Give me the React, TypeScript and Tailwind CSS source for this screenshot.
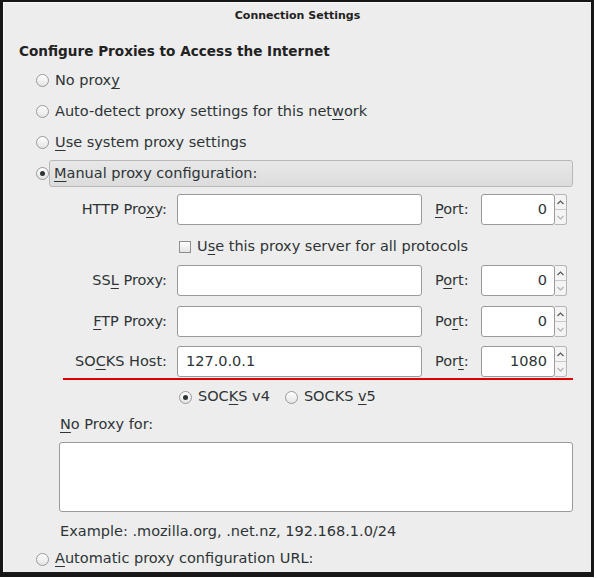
import React from 'react';

const U = ({ children }: { children: React.ReactNode }) => <span className="underline underline-offset-[3px] decoration-1">{children}</span>;

function Radio({ checked = false }: { checked?: boolean }) {
  return (
    <span className="w-[13px] h-[13px] rounded-full border border-[#999] bg-gradient-to-b from-white to-[#e4e4e4] flex items-center justify-center shrink-0">
      {checked && <span className="w-[5px] h-[5px] rounded-full bg-[#2e3436]" />}
    </span>
  );
}

function Spin({ value }: { value: string }) {
  return (
    <div className="flex h-[31px] w-[86px]">
      <div className="flex-1 h-full bg-white border border-[#9a9a9a] rounded-[3px] flex items-center justify-end pr-[7px]">{value}</div>
      <div className="w-[12px] h-full border border-l-0 border-[#b5b5b5] rounded-r-[3px] flex flex-col bg-[#f4f4f4]">
        <span className="flex-1 flex items-center justify-center border-b border-[#c8c8c8]">
          <svg width="7" height="5" viewBox="0 0 7 5"><polyline points="0.5,4 3.5,1 6.5,4" fill="none" stroke="#555" strokeWidth="1.1" /></svg>
        </span>
        <span className="flex-1 flex items-center justify-center">
          <svg width="7" height="5" viewBox="0 0 7 5"><polyline points="0.5,1 3.5,4 6.5,1" fill="none" stroke="#b0b0b0" strokeWidth="1.1" /></svg>
        </span>
      </div>
    </div>
  );
}

function ProxyRow({ label, value = '', port, portLabel }: { label: React.ReactNode; value?: string; port: string; portLabel: React.ReactNode }) {
  return (
    <div className="flex items-center h-[31px]">
      <div className="w-[108px] text-right">{label}</div>
      <div className="ml-[10px] w-[245px] h-[31px] bg-white border border-[#9a9a9a] rounded-[3px] flex items-center pl-[8px]">{value}</div>
      <div className="ml-[13px] w-[46px]">{portLabel}</div>
      <Spin value={port} />
    </div>
  );
}

export default function App() {
  return (
    <div className="w-[597px] h-[579px] bg-white" style={{ fontFamily: '"DejaVu Sans", sans-serif' }}>
      <div className="w-[594px] h-[577px] border-[3px] border-[#161616] border-t-2 bg-[#1a1a1a]">
        <div className="w-full h-[570px] border-l border-t border-[#f8f8f8] bg-[#ededed] text-[14.5px] text-[#2e3436] flex flex-col">
          <div className="h-[26px] flex items-center justify-center text-[11px] font-bold text-[#222]">Connection Settings</div>
          <div className="mt-[10px] h-[24px] flex items-center pl-[15px] text-[13.6px] font-bold text-[#222]">Configure Proxies to Access the Internet</div>
          <div className="mt-[2px] pl-[32px] flex flex-col">
            <div className="h-[31px] flex items-center gap-[6px]"><Radio /><span>No prox<U>y</U></span></div>
            <div className="h-[31px] flex items-center gap-[6px]"><Radio /><span>Auto-detect proxy settings for this net<U>w</U>ork</span></div>
            <div className="h-[31px] flex items-center gap-[6px]"><Radio /><span><U>U</U>se system proxy settings</span></div>
            <div className="h-[31px] flex items-center"><Radio checked /><div className="h-[27px] w-[524px] border border-[#b8b8b8] rounded-[3px] bg-gradient-to-b from-[#e8e8e8] to-[#dcdcdc] flex items-center pl-[4px]"><span><U>M</U>anual proxy configuration:</span></div></div>
          </div>
          <div className="pl-[55px] mt-[5px] flex flex-col">
            <ProxyRow label={<>HTTP Pro<U>x</U>y:</>} portLabel={<><U>P</U>ort:</>} port="0" />
            <div className="h-[40px] flex items-center pt-[3px] pl-[120px] gap-[6px]">
              <span className="w-[12px] h-[12px] border border-[#8f8f8f] bg-gradient-to-b from-white to-[#e4e4e4]" />
              <span>U<U>s</U>e this proxy server for all protocols</span>
            </div>
            <ProxyRow label={<>SS<U>L</U> Proxy:</>} portLabel={<>P<U>o</U>rt:</>} port="0" />
            <div className="h-[10px]" />
            <ProxyRow label={<><U>F</U>TP Proxy:</>} portLabel={<>Po<U>r</U>t:</>} port="0" />
            <div className="h-[9px]" />
            <ProxyRow label={<>SO<U>C</U>KS Host:</>} value="127.0.0.1" portLabel={<>Por<U>t</U>:</>} port="1080" />
            <div className="ml-[4px] mt-[1px] w-[510px] h-[2px] bg-[#e00000]" />
            <div className="mt-[2px] h-[30px] flex items-center pl-[120px]">
              <Radio checked /><span className="ml-[6px]">SOC<U>K</U>S v4</span>
              <span className="ml-[15px]"><Radio /></span><span className="ml-[6px]">SOCKS <U>v</U>5</span>
            </div>
            <div className="h-[26px] flex items-center pl-[1px]"><span><U>N</U>o Proxy for:</span></div>
            <div className="mt-[4px] w-[514px] h-[70px] bg-white border border-[#9a9a9a] rounded-[3px]" />
            <div className="mt-[1px] h-[38px] flex items-center pl-[1px]">Example: .mozilla.org, .net.nz, 192.168.1.0/24</div>
          </div>
          <div className="mt-[1px] pl-[32px] h-[14px] flex items-center gap-[6px]"><Radio /><span><U>A</U>utomatic proxy configuration URL:</span></div>
        </div>
      </div>
    </div>
  );
}
